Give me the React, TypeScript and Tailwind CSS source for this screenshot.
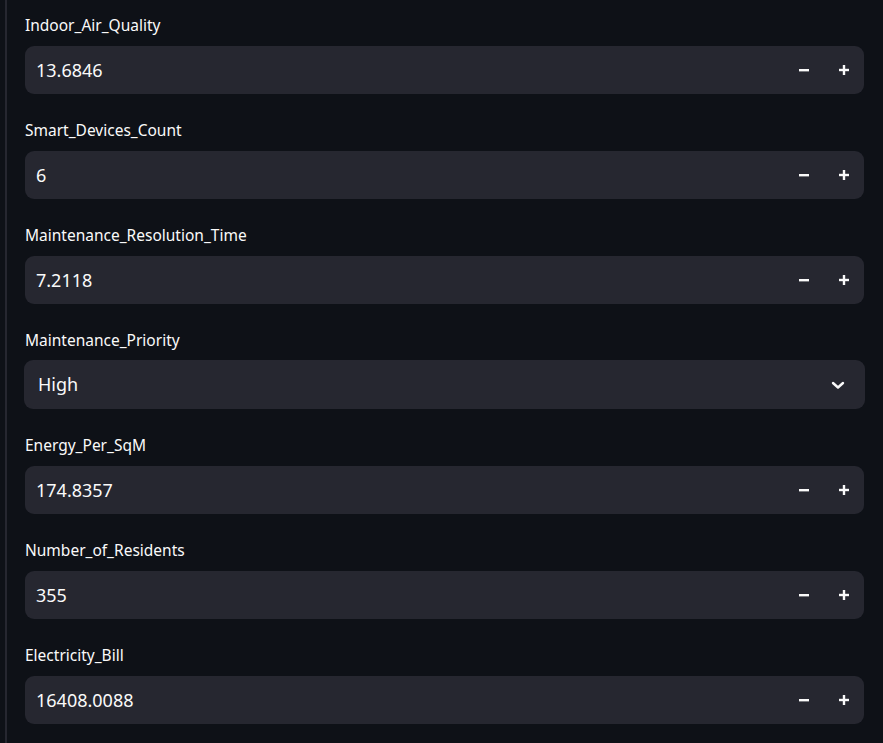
type Field =
  | { kind: "number"; label: string; value: string }
  | { kind: "select"; label: string; value: string };

const fields: Field[] = [
  { kind: "number", label: "Indoor_Air_Quality", value: "13.6846" },
  { kind: "number", label: "Smart_Devices_Count", value: "6" },
  { kind: "number", label: "Maintenance_Resolution_Time", value: "7.2118" },
  { kind: "select", label: "Maintenance_Priority", value: "High" },
  { kind: "number", label: "Energy_Per_SqM", value: "174.8357" },
  { kind: "number", label: "Number_of_Residents", value: "355" },
  { kind: "number", label: "Electricity_Bill", value: "16408.0088" },
];

const font = { fontFamily: '"Noto Sans", "Open Sans", sans-serif' };

const NumberInput = ({ value }: { value: string }) => (
  <div className="flex h-[48px] items-center rounded-[9px] bg-[#262730] ml-px mr-px">
    <input
      readOnly
      value={value}
      className="h-full flex-1 bg-transparent pl-[11px] text-[18px] text-[#fafafa] outline-none"
      style={font}
    />
    <button className="flex h-full w-[40px] items-center justify-center">
      <svg width="10" height="10" viewBox="0 0 10 10">
        <rect x="0" y="4" width="10" height="2.4" fill="#fafafa" />
      </svg>
    </button>
    <button className="flex h-full w-[40px] items-center justify-center">
      <svg width="10" height="10" viewBox="0 0 10 10">
        <rect x="0" y="3.8" width="10" height="2.4" fill="#fafafa" />
        <rect x="3.8" y="0" width="2.4" height="10" fill="#fafafa" />
      </svg>
    </button>
  </div>
);

const SelectBox = ({ value }: { value: string }) => (
  <div className="flex h-[49px] items-center justify-between rounded-[9px] bg-[#262730] pl-[14px] pr-[20px]">
    <span className="text-[18px] text-[#fafafa]">{value}</span>
    <svg width="14" height="10" viewBox="0 0 14 10" fill="none">
      <path
        d="M2 3l5 4.5L12 3"
        stroke="#fafafa"
        strokeWidth="2.4"
        strokeLinecap="round"
        strokeLinejoin="round"
      />
    </svg>
  </div>
);

export default function App() {
  return (
    <div
      className="min-h-screen w-full bg-[#0e1117] text-[#fafafa]"
      style={font}
    >
      <div className="ml-[5px] min-h-screen border-l-2 border-[#262730] pl-[17px] pr-[18px] pt-[15px]">
        <div className="flex flex-col gap-[26px]">
          {fields.map((f) => (
            <div key={f.label}>
              <div
                className={`h-[20px] text-[15.5px] leading-[20px] ml-[1px] ${
                  f.kind === "select" ? "mb-[10px]" : "mb-[11px]"
                }`}
              >
                {f.label}
              </div>
              {f.kind === "number" ? (
                <NumberInput value={f.value} />
              ) : (
                <SelectBox value={f.value} />
              )}
            </div>
          ))}
        </div>
      </div>
    </div>
  );
}
